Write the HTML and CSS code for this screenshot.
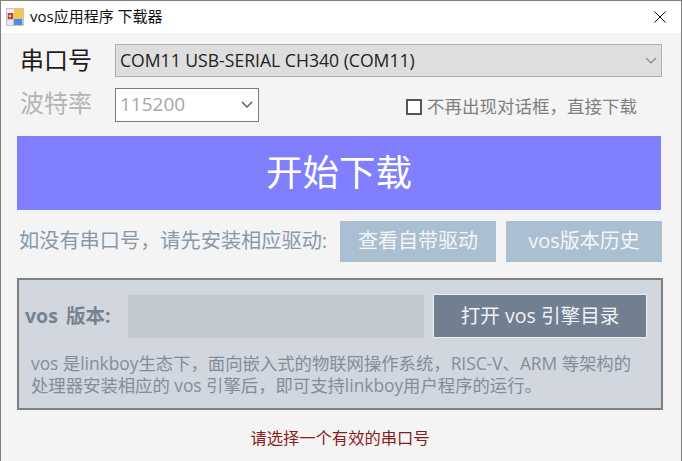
FILE: index.html
```html
<!doctype html>
<html lang="zh-CN">
    <head>
        <meta charset="utf-8">
        <meta name="viewport" content="width=device-width, initial-scale=1.0">
        <title>vos应用程序 下载器</title>
        <link rel="stylesheet" href="styles.css">
    </head>
    <body>
        <div class="window">
            <header class="titlebar">
                <svg class="app-icon" width="18" height="18" viewBox="0 0 18 18">
                    <rect x="0" y="0" width="18" height="18" fill="#c4c4cc"/>
                    <rect x="1" y="1" width="7" height="4" fill="#efeff2"/>
                    <rect x="8" y="1" width="9" height="9" fill="#f5c842"/>
                    <rect x="2" y="5" width="5" height="6" fill="#c8403a"/>
                    <rect x="3" y="7" width="2" height="2" fill="#f0c8b8"/>
                    <rect x="8" y="11" width="8" height="6" fill="#5a88d8"/>
                    <rect x="1" y="12" width="6" height="5" fill="#e8e8ec"/>
                </svg>
                <span class="title">vos应用程序 下载器</span>
                <svg class="close" width="12" height="12" viewBox="0 0 12 12">
                    <path d="M0.5 0.5 L11.5 11.5 M11.5 0.5 L0.5 11.5" stroke="#111" stroke-width="1" fill="none"/>
                </svg>
            </header>
            <main class="content">
                <div class="row row-port">
                    <span class="field-label">串口号</span>
                    <div class="combo combo-port">
                        <span>COM11 USB-SERIAL CH340 (COM11)</span>
                        <svg class="chevron" width="12" height="7" viewBox="0 0 12 7"><path d="M1 1 L6 6 L11 1" stroke="#888" stroke-width="1.2" fill="none"/></svg>
                    </div>
                </div>
                <div class="row row-baud">
                    <span class="field-label disabled">波特率</span>
                    <div class="combo combo-baud">
                        <span>115200</span>
                        <svg class="chevron" width="12" height="7" viewBox="0 0 12 7"><path d="M1 1 L6 6 L11 1" stroke="#555" stroke-width="1.4" fill="none"/></svg>
                    </div>
                    <label class="skip">
                        <span class="checkbox"></span>
                        <span>不再出现对话框，直接下载</span>
                    </label>
                </div>
                <button class="start">开始下载</button>
                <div class="row row-driver">
                    <span class="hint">如没有串口号，请先安装相应驱动:</span>
                    <button class="light-btn btn-driver">查看自带驱动</button>
                    <button class="light-btn btn-history">vos版本历史</button>
                </div>
                <section class="panel">
                    <div class="panel-top">
                        <span class="version-label">vos 版本:</span>
                        <div class="version-box"></div>
                        <button class="open-dir">打开 vos 引擎目录</button>
                    </div>
                    <p class="desc">vos 是linkboy生态下，面向嵌入式的物联网操作系统，RISC-V、ARM 等架构的<br>处理器安装相应的 vos 引擎后，即可支持linkboy用户程序的运行。</p>
                </section>
                <p class="error">请选择一个有效的串口号</p>
            </main>
        </div>
    </body>
</html>
```
FILE: styles.css
```css
* {
    padding: 0;
    margin: 0;
    box-sizing: border-box;
    font-family: "Open Sans", "Noto Sans CJK SC", sans-serif;
}

html,
body {
    height: 100%;
    overflow: hidden;
}

.window {
    width: 682px;
    height: 461px;
    display: flex;
    flex-direction: column;
    border: 1px solid #7f7f7f;
    border-bottom: none;
    background: #f4f4f4;
}

.titlebar {
    height: 32px;
    flex: none;
    display: flex;
    align-items: center;
    padding: 0 15px 0 5px;
    background: #fff;
}

.app-icon {
    flex: none;
}

.title {
    margin-left: 6px;
    padding-bottom: 3px;
    font-size: 15px;
    color: #111;
}

.close {
    margin-left: auto;
}

.content {
    flex: 1;
    padding: 11px 18px 0 16px;
    display: flex;
    flex-direction: column;
}

.row {
    display: flex;
    align-items: center;
}

.row-port {
    height: 33px;
}

.field-label {
    width: 98px;
    flex: none;
    padding-left: 3px;
    padding-bottom: 1px;
    font-size: 24px;
    line-height: 32px;
    color: #1c1c1c;
}

.field-label.disabled {
    padding-bottom: 5px;
    line-height: 28px;
    color: #b4b4b4;
}

.combo {
    display: flex;
    align-items: center;
    justify-content: space-between;
    color: #222;
}

.combo-port {
    width: 547px;
    height: 33px;
    padding: 0 4px 1px 4px;
    background: #dedede;
    border: 1px solid #b0b0b0;
    font-size: 17.6px;
}

.row-baud {
    height: 34px;
    margin-top: 11px;
}

.combo-baud {
    width: 144px;
    height: 34px;
    padding: 0 5px 2px 4px;
    background: #fff;
    border: 1px solid #7a7a7a;
    font-size: 19px;
    color: #a6a6a6;
}

.skip {
    display: flex;
    align-items: center;
    gap: 5px;
    margin-left: 147px;
    margin-top: 4px;
    font-size: 17.5px;
    color: #7f7f7f;
}

.skip span:last-child {
    padding-bottom: 3px;
}

.checkbox {
    width: 16px;
    height: 16px;
    background: #fff;
    border: 2px solid #555;
}

.start {
    height: 74px;
    margin-top: 14px;
    width: 644px;
    padding-bottom: 6px;
    border: none;
    background: #8080ff;
    color: #fff;
    font-size: 36.5px;
}

.row-driver {
    margin-top: 11px;
    height: 41px;
}

.hint {
    width: 323px;
    flex: none;
    padding-left: 2px;
    padding-bottom: 5px;
    font-size: 20.2px;
    white-space: nowrap;
    color: #8a99a8;
}

.light-btn {
    height: 41px;
    width: 156px;
    padding-bottom: 4px;
    border: none;
    background: #abbfd2;
    color: #f4f6f8;
    font-size: 20px;
}

.btn-history {
    margin-left: 10px;
}

.panel {
    margin-top: 16px;
    width: 646px;
    height: 132px;
    border: 2px solid #808080;
    background: #d2d6de;
    padding: 14px 14px 0 6px;
}

.panel-top {
    display: flex;
    align-items: center;
}

.version-label {
    width: 103px;
    flex: none;
    padding-bottom: 3px;
    font-size: 19.5px;
    font-weight: 700;
    word-spacing: 3px;
    white-space: nowrap;
    color: #76838f;
}

.version-box {
    width: 296px;
    height: 43px;
    background: #c1c8d0;
}

.open-dir {
    width: 214px;
    height: 44px;
    margin-left: 9px;
    padding-bottom: 3px;
    background: #708090;
    border: 1px solid #eef1f4;
    color: #f1f3f5;
    font-size: 19.6px;
}

.desc {
    margin-top: 14px;
    padding-left: 6px;
    font-size: 17.35px;
    line-height: 22px;
    white-space: nowrap;
    color: #808e9c;
}

.error {
    margin-top: 15px;
    text-align: center;
    font-size: 16.3px;
    color: #8b1a1a;
}
```
